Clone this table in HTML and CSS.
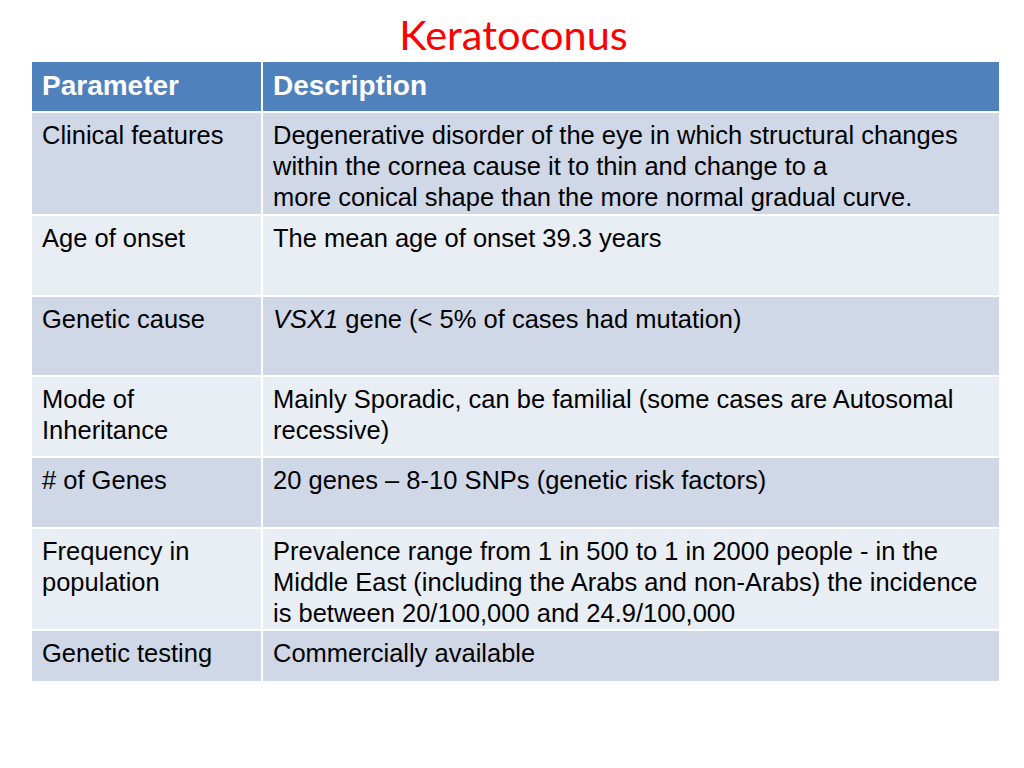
FILE: index.html
```html
<!DOCTYPE html>
<html>
<head>
<meta charset="utf-8">
<title>Keratoconus</title>
<link rel="stylesheet" href="styles.css">
</head>
<body>
<h1 class="title">Keratoconus</h1>
<div class="table">
  <div class="cell head">Parameter</div>
  <div class="cell head">Description</div>

  <div class="cell odd r1">Clinical features</div>
  <div class="cell odd r1">Degenerative disorder of the eye in which structural changes<br>within the cornea cause it to thin and change to a<br>more conical shape than the more normal gradual curve.</div>

  <div class="cell even r2">Age of onset</div>
  <div class="cell even r2">The mean age of onset 39.3 years</div>

  <div class="cell odd r3">Genetic cause</div>
  <div class="cell odd r3"><i>VSX1</i> gene (&lt; 5% of cases had mutation)</div>

  <div class="cell even r4">Mode of<br>Inheritance</div>
  <div class="cell even r4">Mainly Sporadic, can be familial (some cases are Autosomal<br>recessive)</div>

  <div class="cell odd r5"># of Genes</div>
  <div class="cell odd r5">20 genes – 8-10 SNPs (genetic risk factors)</div>

  <div class="cell even r6">Frequency in<br>population</div>
  <div class="cell even r6">Prevalence range from 1 in 500 to 1 in 2000 people - in the<br>Middle East (including the Arabs and non-Arabs) the incidence<br>is between 20/100,000 and 24.9/100,000</div>

  <div class="cell odd r7">Genetic testing</div>
  <div class="cell odd r7">Commercially available</div>
</div>
</body>
</html>
```
FILE: styles.css
```css
html, body {
  margin: 0;
  padding: 0;
  background: #ffffff;
}
body {
  width: 1024px;
  height: 768px;
  overflow: hidden;
}
.title {
  margin: 0;
  height: 62px;
  padding-left: 3px;
  box-sizing: border-box;
  text-align: center;
  font-family: Lato, "Open Sans", sans-serif;
  font-weight: normal;
  font-size: 41.5px;
  line-height: 68px;
  color: #ff0000;
}
.table {
  margin-left: 32px;
  width: 967px;
  display: grid;
  grid-template-columns: 229px 736px;
  grid-template-rows: 49px 101px 79px 78px 79px 69px 100px 50px;
  gap: 2px;
  font-family: "Liberation Sans", Arial, sans-serif;
  font-size: 25.5px;
  line-height: 31px;
  color: #000000;
}
.cell {
  padding: 7px 10px 0 10px;
  box-sizing: border-box;
  white-space: nowrap;
}
.head {
  background: #4f81bd;
  color: #ffffff;
  font-weight: bold;
  font-size: 28px;
  padding-top: 8px;
}
.odd {
  background: #d0d8e8;
}
.even {
  background: #e9edf4;
}
```
